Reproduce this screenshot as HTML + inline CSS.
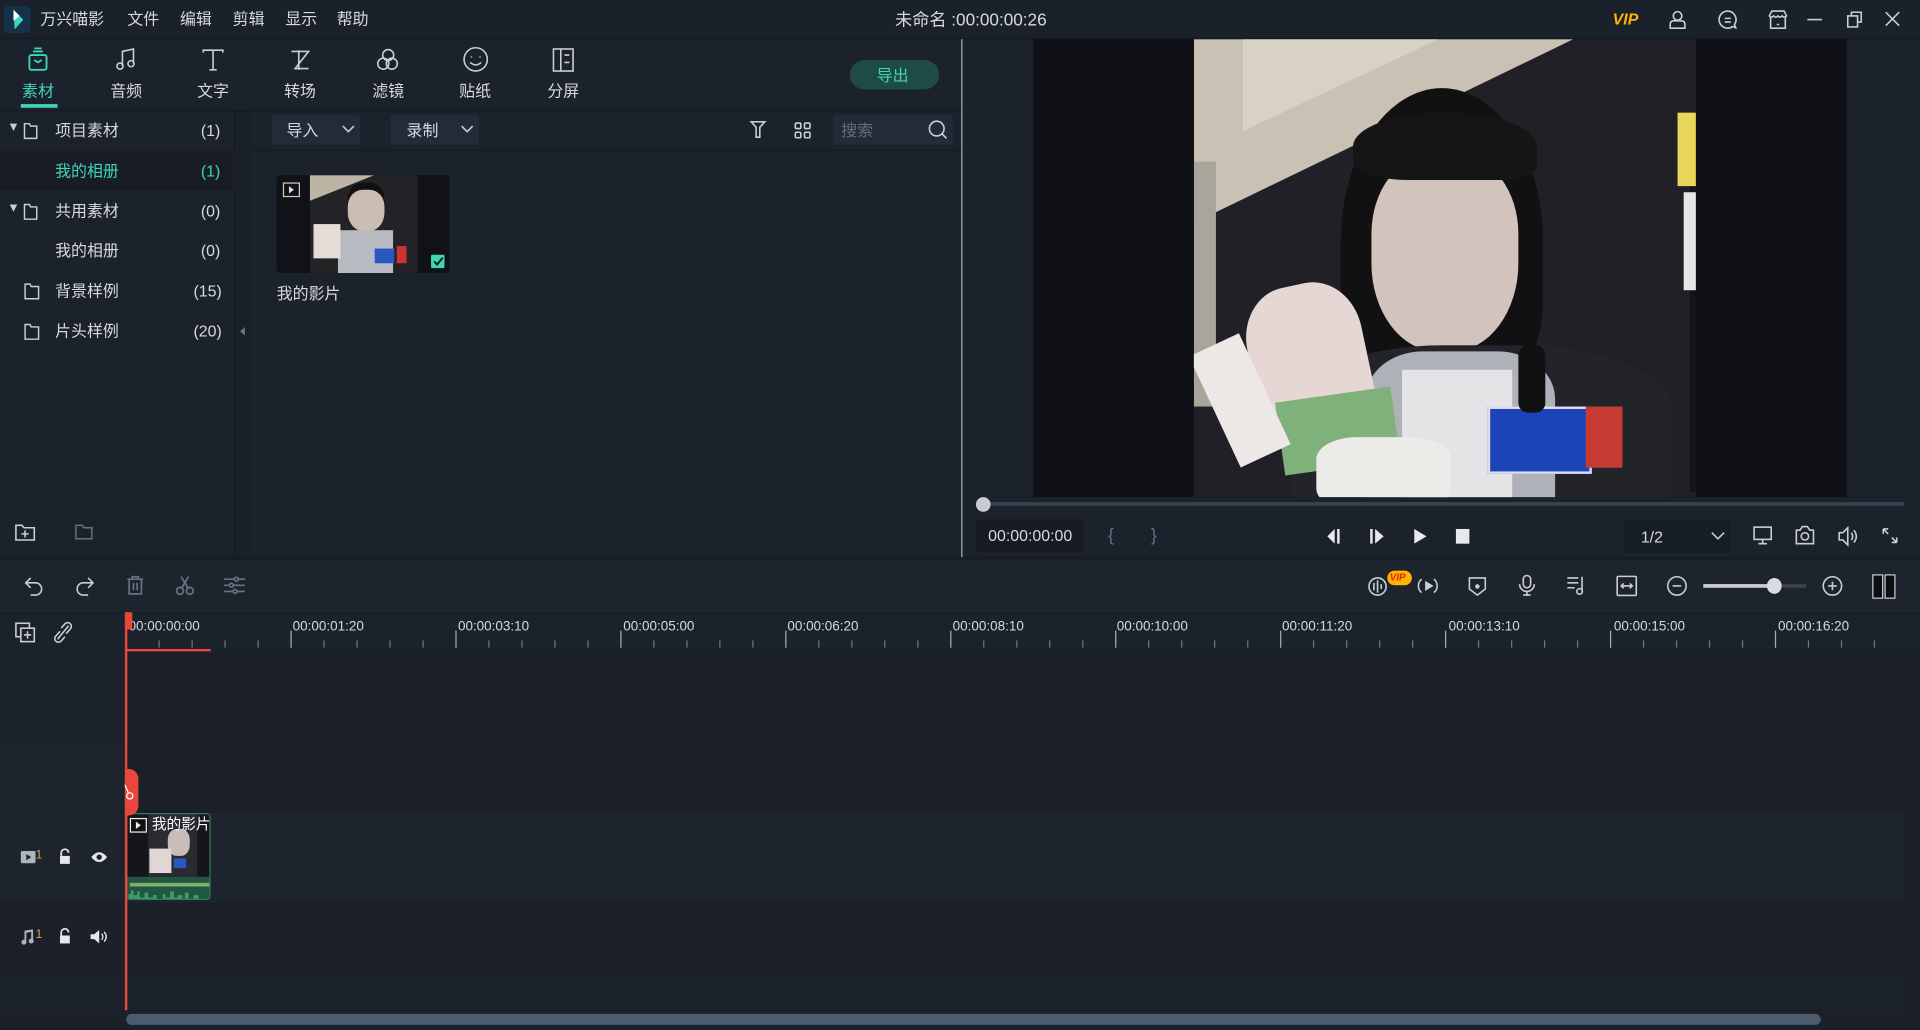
<!DOCTYPE html>
<html><head><meta charset="utf-8">
<style>
*{margin:0;padding:0;box-sizing:border-box}
html,body{width:1920px;height:1030px;overflow:hidden;background:#1c222c}
#w{position:absolute;left:0;top:0;width:1568px;height:841px;transform:scale(1.22449);transform-origin:0 0;background:#1c222c;font-family:"Liberation Sans","Noto Sans CJK SC",sans-serif;color:#d6dae0;font-size:13px}
.a{position:absolute}
.t{position:absolute;white-space:nowrap;line-height:1}
svg{position:absolute;overflow:visible}
.ic{stroke:#c9ced6;fill:none;stroke-width:1.3}
</style></head><body><div id="w">
<!-- title bar -->
<div class="a" style="left:0;top:0;width:1568px;height:32px;background:#1b212b;border-bottom:1px solid #141920"></div>
<div class="a" style="left:3px;top:5px;width:22px;height:22px;border-radius:4px;background:#15324a"></div>
<svg style="left:8px;top:8px" width="14" height="17"><path d="M3 0 L11 8 L4 16 Z" fill="#3fd6c0"/><path d="M3 0 L8 5 L3 9Z" fill="#fff"/></svg>
<div class="t" style="left:33px;top:9px;font-size:13px">万兴喵影</div>
<div class="t" style="left:104px;top:9px">文件</div>
<div class="t" style="left:147px;top:9px">编辑</div>
<div class="t" style="left:190px;top:9px">剪辑</div>
<div class="t" style="left:233px;top:9px">显示</div>
<div class="t" style="left:275px;top:9px">帮助</div>
<div class="t" style="left:731px;top:9px;font-size:14px">未命名 :00:00:00:26</div>
<div class="t" style="left:1317px;top:9px;font-size:13px;font-weight:bold;font-style:italic;color:#ffb400">VIP</div>
<svg style="left:1363px;top:8px" width="16" height="16" class="ic"><circle cx="7" cy="5" r="3.5"/><path d="M1 15 v-3 q0-3 3-3 h6 q3 0 3 3 v3z"/></svg>
<svg style="left:1403px;top:8px" width="16" height="16" class="ic"><path d="M8 1a7 7 0 1 0 4 12.7l2.5 1-1-2.7A7 7 0 0 0 8 1z"/><path d="M5.5 7h5M5.5 10h5"/></svg>
<svg style="left:1444px;top:8px" width="16" height="16" class="ic"><path d="M1 5 l2-4h10l2 4q-2 2-3.5 0-2 2-3.5 0-2 2-3.5 0-2 2-3.5 0z M2 6v9h12V6 M7 12h2"/></svg>
<svg style="left:1476px;top:15px" width="12" height="2" class="ic"><path d="M0 1h12"/></svg>
<svg style="left:1508px;top:9px" width="14" height="14" class="ic"><rect x="1" y="4" width="8" height="9"/><path d="M4 4V1h8v8H9"/></svg>
<svg style="left:1539px;top:9px" width="13" height="13" class="ic"><path d="M1 1l11 11M12 1L1 12"/></svg>

<!-- tabs -->
<svg style="left:22px;top:39px" width="20" height="20" fill="none" stroke="#3fd6b6" stroke-width="1.5"><rect x="2" y="6" width="14" height="12" rx="1.5"/><path d="M5 3h8M6 0.5h6"/><path d="M6 10l3 2 3-2" /></svg>
<div class="t" style="left:18px;top:68px;color:#3fd6b6">素材</div>
<div class="a" style="left:17px;top:85px;width:30px;height:3px;background:#3fd6b6"></div>
<svg style="left:94px;top:39px" width="18" height="20" class="ic" stroke-width="1.6"><path d="M6 15V3l9-2v12"/><circle cx="4" cy="15" r="2.5"/><circle cx="13" cy="13" r="2.5"/></svg>
<div class="t" style="left:90px;top:68px">音频</div>
<svg style="left:165px;top:40px" width="18" height="18" class="ic" stroke-width="1.6"><path d="M1 3V1h16v2M9 1v16M6 17h6"/></svg>
<div class="t" style="left:161px;top:68px">文字</div>
<svg style="left:236px;top:40px" width="18" height="18" class="ic" stroke-width="1.6"><path d="M2 2h14L5 16h11M8 1v16"/></svg>
<div class="t" style="left:232px;top:68px">转场</div>
<svg style="left:307px;top:39px" width="20" height="20" class="ic" stroke-width="1.6"><circle cx="10" cy="6" r="4.5"/><circle cx="6" cy="13" r="4.5"/><circle cx="13" cy="13" r="4.5"/></svg>
<div class="t" style="left:304px;top:68px">滤镜</div>
<svg style="left:378px;top:38px" width="21" height="21" class="ic" stroke-width="1.6"><circle cx="10.5" cy="10.5" r="9.5"/><path d="M7 8v1M14 8v1M6 13q4.5 4 9 0"/></svg>
<div class="t" style="left:375px;top:68px">贴纸</div>
<svg style="left:451px;top:39px" width="18" height="20" class="ic" stroke-width="1.6"><rect x="1" y="1" width="16" height="18"/><path d="M7 1v18M10 6h4M10 12h4"/></svg>
<div class="t" style="left:447px;top:68px">分屏</div>
<div class="a" style="left:694px;top:49px;width:73px;height:24px;border-radius:12px;background:#1f4b45"></div>
<div class="t" style="left:716px;top:55px;color:#3fd6b6">导出</div>
<div class="a" style="left:0;top:90px;width:785px;height:1px;background:#151a22"></div>

<!-- left panel -->
<div class="a" style="left:191px;top:91px;width:1px;height:365px;background:#151a22"></div>
<div class="a" style="left:192px;top:91px;width:13px;height:365px;background:#1a2029"></div>
<div class="a" style="left:0;top:123px;width:190px;height:32px;background:#171c25"></div>
<svg style="left:8px;top:100px" width="20" height="14"><path d="M0 1h6l-3 6z" fill="#c9ced6"/><path d="M12 1h4l1 2h5v10H12z" fill="none" stroke="#c9ced6" stroke-width="1.2"/></svg>
<div class="t" style="left:45px;top:100px">项目素材</div><div class="t" style="left:164px;top:100px">(1)</div>
<div class="t" style="left:45px;top:133px;color:#3fd6b6">我的相册</div><div class="t" style="left:164px;top:133px;color:#3fd6b6">(1)</div>
<svg style="left:8px;top:166px" width="20" height="14"><path d="M0 1h6l-3 6z" fill="#c9ced6"/><path d="M12 1h4l1 2h5v10H12z" fill="none" stroke="#c9ced6" stroke-width="1.2"/></svg>
<div class="t" style="left:45px;top:166px">共用素材</div><div class="t" style="left:164px;top:166px">(0)</div>
<div class="t" style="left:45px;top:198px">我的相册</div><div class="t" style="left:164px;top:198px">(0)</div>
<svg style="left:20px;top:231px" width="12" height="14"><path d="M0.5 1h4l1 2h6v10H0.5z" fill="none" stroke="#c9ced6" stroke-width="1.2"/></svg>
<div class="t" style="left:45px;top:231px">背景样例</div><div class="t" style="left:158px;top:231px">(15)</div>
<svg style="left:20px;top:264px" width="12" height="14"><path d="M0.5 1h4l1 2h6v10H0.5z" fill="none" stroke="#c9ced6" stroke-width="1.2"/></svg>
<div class="t" style="left:45px;top:264px">片头样例</div><div class="t" style="left:158px;top:264px">(20)</div>
<svg style="left:196px;top:267px" width="5" height="7"><path d="M4 0L0 3.5 4 7z" fill="#6a7280"/></svg>
<svg style="left:12px;top:428px" width="17" height="14" class="ic"><path d="M1 1h5l1.5 2H16v10H1z M8.5 5v6M5.5 8h6"/></svg>
<svg style="left:61px;top:428px" width="15" height="13" stroke="#6a7280" fill="none" stroke-width="1.2"><path d="M1 1h5l1.5 2H14v9H1z"/></svg>

<!-- media area -->
<div class="a" style="left:222px;top:94px;width:72px;height:24px;background:#242b36;border-radius:2px"></div>
<div class="t" style="left:234px;top:100px">导入</div>
<svg style="left:280px;top:103px" width="9" height="5" class="ic"><path d="M0 0l4.5 4.5L9 0"/></svg>
<div class="a" style="left:319px;top:94px;width:72px;height:24px;background:#242b36;border-radius:2px"></div>
<div class="t" style="left:332px;top:100px">录制</div>
<svg style="left:377px;top:103px" width="9" height="5" class="ic"><path d="M0 0l4.5 4.5L9 0"/></svg>
<svg style="left:613px;top:99px" width="12" height="14" class="ic"><path d="M0.5 0.5h11L7.5 5v8h-3V5z"/></svg>
<svg style="left:649px;top:100px" width="13" height="13" class="ic"><rect x=".5" y=".5" width="4.5" height="4.5" rx="1"/><rect x="8" y=".5" width="4.5" height="4.5" rx="1"/><rect x=".5" y="8" width="4.5" height="4.5" rx="1"/><rect x="8" y="8" width="4.5" height="4.5" rx="1"/></svg>
<div class="a" style="left:680px;top:94px;width:98px;height:24px;background:#242b36;border-radius:2px"></div>
<div class="t" style="left:687px;top:100px;color:#656d7a">搜索</div>
<svg style="left:758px;top:98px" width="16" height="16" class="ic" stroke-width="1.5"><circle cx="7" cy="7" r="6"/><path d="M11.5 11.5l3.5 3.5"/></svg>
<div class="a" style="left:205px;top:122px;width:580px;height:1px;background:#151a22"></div>
<div class="a" style="left:226px;top:143px;width:141px;height:80px;background:#101217;border-radius:3px;overflow:hidden">
 <div class="a" style="left:27px;top:0;width:88px;height:80px;background:#222227"></div>
 <div class="a" style="left:27px;top:0;width:88px;height:30px;background:#bdb4a6;clip-path:polygon(0 0,60% 0,0 70%)"></div>
 <div class="a" style="left:58px;top:12px;width:30px;height:34px;background:#cbbcb4;border-radius:40% 40% 45% 45%;box-shadow:0 -6px 0 #111"></div>
 <div class="a" style="left:50px;top:45px;width:45px;height:35px;background:#b8bcc2"></div>
 <div class="a" style="left:30px;top:40px;width:22px;height:28px;background:#e7dcd8"></div>
 <div class="a" style="left:80px;top:60px;width:16px;height:12px;background:#2a56c0"></div>
 <div class="a" style="left:98px;top:58px;width:8px;height:14px;background:#c33"></div>
</div>
<svg style="left:231px;top:149px" width="14" height="12"><rect x=".5" y=".5" width="13" height="11" fill="#111" stroke="#ccc"/><path d="M5 3l4 3-4 3z" fill="#ddd"/></svg>
<div class="a" style="left:352px;top:208px;width:11px;height:11px;background:#3fd6b6;border-radius:1px"></div>
<svg style="left:354px;top:210px" width="8" height="7"><path d="M0.5 3.5l2.5 2.5 4.5-5.5" stroke="#111" fill="none" stroke-width="1.5"/></svg>
<div class="t" style="left:226px;top:233px">我的影片</div>

<!-- preview -->
<div class="a" style="left:785px;top:32px;width:1px;height:423px;background:#a8adb4"></div>
<div class="a" style="left:844px;top:32px;width:664px;height:374px;background:#101116"></div>
<div class="a" style="left:975px;top:32px;width:410px;height:374px;background:#202026;overflow:hidden">
 <div class="a" style="left:0;top:0;width:410px;height:150px;background:#c9c2b4;clip-path:polygon(0 0,310px 0,0 150px)"></div>
 <div class="a" style="left:0;top:0;width:410px;height:150px;background:#d8d2c6;clip-path:polygon(40px 0,200px 0,40px 75px)"></div>
 <div class="a" style="left:0;top:100px;width:18px;height:200px;background:#aaa59a"></div>
 <div class="a" style="left:405px;top:70px;width:5px;height:300px;background:#141418"></div>
 <div class="a" style="left:395px;top:60px;width:15px;height:60px;background:#e8d75a"></div>
 <div class="a" style="left:400px;top:125px;width:10px;height:80px;background:#e6e6e6"></div>
 <div class="a" style="left:120px;top:40px;width:165px;height:250px;background:#111;border-radius:50% 50% 30% 30%"></div>
 <div class="a" style="left:145px;top:95px;width:120px;height:160px;background:#d2c3bd;border-radius:40% 40% 45% 45%"></div>
 <div class="a" style="left:130px;top:60px;width:150px;height:55px;background:#151515;border-radius:50% 50% 20% 30%"></div>
 <div class="a" style="left:80px;top:250px;width:310px;height:130px;background:#23232a;border-radius:40% 40% 0 0"></div>
 <div class="a" style="left:140px;top:255px;width:155px;height:130px;background:#aeb2b8;border-radius:30% 30% 0 0"></div>
 <div class="a" style="left:170px;top:270px;width:90px;height:110px;background:#e4e4e6"></div>
 <div class="a" style="left:45px;top:200px;width:95px;height:110px;background:#e6d6d4;transform:rotate(-12deg);border-radius:40% 40% 0 0"></div>
 <div class="a" style="left:70px;top:290px;width:95px;height:60px;background:#7fb27a;transform:rotate(-8deg)"></div>
 <div class="a" style="left:15px;top:245px;width:45px;height:100px;background:#ece8e6;transform:rotate(-25deg)"></div>
 <div class="a" style="left:100px;top:325px;width:110px;height:60px;background:#ecebe8;border-radius:30%"></div>
 <div class="a" style="left:240px;top:300px;width:85px;height:55px;background:#1c44b8;border:2px solid #dde"></div>
 <div class="a" style="left:320px;top:300px;width:30px;height:50px;background:#c53b33"></div>
 <div class="a" style="left:265px;top:250px;width:22px;height:55px;background:#111;border-radius:8px"></div>
</div>
<div class="a" style="left:803px;top:410px;width:752px;height:3px;background:#3a424e"></div>
<div class="a" style="left:797px;top:406px;width:12px;height:12px;border-radius:50%;background:#c8ccd2"></div>
<div class="a" style="left:797px;top:424px;width:88px;height:27px;background:#161b24;border-radius:3px"></div>
<div class="t" style="left:807px;top:431px;font-size:13px">00:00:00:00</div>
<div class="t" style="left:905px;top:430px;color:#6a7280;font-size:14px">{</div>
<div class="t" style="left:940px;top:430px;color:#6a7280;font-size:14px">}</div>
<svg style="left:1084px;top:432px" width="12" height="12" fill="#e6e9ee"><path d="M6 0v12L0 6z"/><rect x="8" y="0" width="2" height="12"/></svg>
<svg style="left:1119px;top:432px" width="12" height="12" fill="#e6e9ee"><rect x="0" y="0" width="2" height="12"/><path d="M4 0v12l7-6z"/></svg>
<svg style="left:1155px;top:432px" width="10" height="12" fill="#e6e9ee"><path d="M0 0v12l10-6z"/></svg>
<svg style="left:1189px;top:432px" width="11" height="12" fill="#e6e9ee"><rect width="11" height="12"/></svg>
<div class="a" style="left:1327px;top:424px;width:86px;height:28px;background:#181e27;border-radius:3px"></div>
<div class="t" style="left:1340px;top:432px">1/2</div>
<svg style="left:1398px;top:435px" width="10" height="6" class="ic"><path d="M0 0l5 5 5-5"/></svg>
<svg style="left:1432px;top:430px" width="15" height="16" class="ic"><rect x=".5" y=".5" width="14" height="10"/><path d="M7.5 11v3M4 14h7"/></svg>
<svg style="left:1466px;top:429px" width="16" height="16" class="ic" stroke-width="1.4"><path d="M1 4h3l2-3h4l2 3h3v11H1z"/><circle cx="8" cy="9" r="3"/></svg>
<svg style="left:1501px;top:430px" width="16" height="16" class="ic" stroke-width="1.4"><path d="M1 5h3l4-4v14l-4-4H1z M11 5q2 3 0 6M13 3q4 5 0 10"/></svg>
<svg style="left:1537px;top:431px" width="13" height="13" class="ic" stroke-width="1.4"><path d="M1 1l4 4M1 1v4M1 1h4M12 12l-4-4M12 12v-4M12 12h-4"/></svg>

<!-- divider between top and timeline -->
<div class="a" style="left:0;top:455px;width:1568px;height:2px;background:#161b23"></div>
<div class="a" style="left:0;top:457px;width:1568px;height:43px;background:#1e242e"></div>
<svg style="left:20px;top:470px" width="16" height="16" class="ic" stroke-width="1.5"><path d="M5 2L1 6l4 4M1 6h8a5 5 0 0 1 0 10H5"/></svg>
<svg style="left:61px;top:470px" width="16" height="16" class="ic" stroke-width="1.5"><path d="M11 2l4 4-4 4M15 6H7a5 5 0 0 0 0 10h4"/></svg>
<svg style="left:103px;top:470px" width="15" height="16" stroke="#6a7280" fill="none" stroke-width="1.4"><path d="M1 3h13M5 3V1h5v2M2.5 3v12h10V3M6 6v6M9 6v6"/></svg>
<svg style="left:143px;top:470px" width="16" height="16" stroke="#6a7280" fill="none" stroke-width="1.4"><circle cx="4" cy="12.5" r="2.8"/><circle cx="12" cy="12.5" r="2.8"/><path d="M5.5 10L11 1M10.5 10L5 1"/></svg>
<svg style="left:183px;top:471px" width="17" height="15" stroke="#6a7280" fill="none" stroke-width="1.3"><path d="M0 2h17M0 7h17M0 12h17"/><circle cx="10" cy="2" r="1.6" fill="#1e242e"/><circle cx="6" cy="7" r="1.6" fill="#1e242e"/><circle cx="9" cy="12" r="1.6" fill="#1e242e"/></svg>
<svg style="left:1117px;top:470px" width="16" height="17" class="ic" stroke-width="1.4"><circle cx="8" cy="9" r="7"/><path d="M5 6v6M8 4v10M11 7v4"/></svg>
<div class="a" style="left:1133px;top:466px;width:20px;height:12px;border-radius:6px;background:#ffb400"></div>
<div class="t" style="left:1135px;top:468px;font-size:8px;font-weight:bold;font-style:italic;color:#e0260f">VIP</div>
<svg style="left:1158px;top:470px" width="16" height="17" class="ic" stroke-width="1.4"><path d="M3 3a7 7 0 0 0 0 11M13 3a7 7 0 0 1 0 11"/><path d="M6.5 5.5v6l5-3z" fill="#c9ced6"/></svg>
<svg style="left:1199px;top:470px" width="15" height="17" class="ic" stroke-width="1.4"><path d="M1 2h13v9l-6.5 5L1 11z"/><circle cx="7.5" cy="9" r="1.2" fill="#c9ced6"/></svg>
<svg style="left:1240px;top:469px" width="14" height="18" class="ic" stroke-width="1.4"><rect x="4" y="1" width="6" height="10" rx="3"/><path d="M1 8a6 6 0 0 0 12 0M7 14v3M4 17h6"/></svg>
<svg style="left:1280px;top:470px" width="16" height="17" class="ic" stroke-width="1.4"><path d="M0 2h9M0 6h9M0 10h6M12 1v12"/><circle cx="10" cy="13" r="2.3"/></svg>
<svg style="left:1320px;top:470px" width="17" height="17" class="ic" stroke-width="1.4"><rect x=".7" y=".7" width="15.6" height="15.6" rx="1"/><path d="M4 8.5h9M6 6.5l-2 2 2 2M11 6.5l2 2-2 2"/></svg>
<svg style="left:1361px;top:470px" width="17" height="17" class="ic" stroke-width="1.4"><circle cx="8.5" cy="8.5" r="7.5"/><path d="M5 8.5h7"/></svg>
<div class="a" style="left:1391px;top:477px;width:84px;height:3px;background:#3a424e"></div>
<div class="a" style="left:1391px;top:477px;width:58px;height:3px;background:#c8ccd2"></div>
<div class="a" style="left:1443px;top:472px;width:12px;height:13px;border-radius:50%;background:#d8dce2"></div>
<svg style="left:1488px;top:470px" width="17" height="17" class="ic" stroke-width="1.4"><circle cx="8.5" cy="8.5" r="7.5"/><path d="M5 8.5h7M8.5 5v7"/></svg>
<svg style="left:1529px;top:469px" width="20" height="20"><rect x="0.5" y="0.5" width="8" height="19" fill="#0c0e12" stroke="#c9ced6"/><rect x="10.5" y="0.5" width="8" height="19" fill="#0c0e12" stroke="#c9ced6"/></svg>

<!-- ruler -->
<div class="a" style="left:0;top:500px;width:1568px;height:1px;background:#171c24"></div>
<div class="a" style="left:0;top:501px;width:1568px;height:31px;background:#1c222c"></div>
<svg style="left:12px;top:508px" width="17" height="17" class="ic" stroke-width="1.3"><rect x="1" y="1" width="11" height="11"/><rect x="5" y="5" width="11" height="11" fill="#1c222c"/><path d="M10.5 7.5v6M7.5 10.5h6"/></svg>
<svg style="left:44px;top:508px" width="15" height="17" class="ic" stroke-width="1.3"><path d="M6 5l3-3.5a3 3 0 0 1 4.5 4L10 9.5M9 12l-3 3.5A3 3 0 0 1 1.5 11.5L5 7.5M3 14L12 3"/></svg>
<svg style="left:103px;top:515px" width="1452" height="16">
<g stroke="#a7aeb8" stroke-width="1">
<path d="M0 0v14M134.7 0v14M269.4 0v14M404.1 0v14M538.8 0v14M673.5 0v14M808.2 0v14M942.9 0v14M1077.6 0v14M1212.3 0v14M1347 0v14"/>
</g>
<g stroke="#6d7682" stroke-width="1" id="ticks"></g>
</svg>
<div class="a" style="left:103px;top:530px;width:69px;height:2px;background:#e8473d"></div>
<div class="t" style="left:105px;top:507px;font-size:11px">00:00:00:00</div>
<div class="t" style="left:239px;top:507px;font-size:11px">00:00:01:20</div>
<div class="t" style="left:374px;top:507px;font-size:11px">00:00:03:10</div>
<div class="t" style="left:509px;top:507px;font-size:11px">00:00:05:00</div>
<div class="t" style="left:643px;top:507px;font-size:11px">00:00:06:20</div>
<div class="t" style="left:778px;top:507px;font-size:11px">00:00:08:10</div>
<div class="t" style="left:912px;top:507px;font-size:11px">00:00:10:00</div>
<div class="t" style="left:1047px;top:507px;font-size:11px">00:00:11:20</div>
<div class="t" style="left:1183px;top:507px;font-size:11px">00:00:13:10</div>
<div class="t" style="left:1318px;top:507px;font-size:11px">00:00:15:00</div>
<div class="t" style="left:1452px;top:507px;font-size:11px">00:00:16:20</div>

<!-- tracks -->
<div class="a" style="left:0;top:532px;width:1568px;height:309px;background:#1a1f28"></div>
<div class="a" style="left:0;top:532px;width:102px;height:74px;background:#1c222c"></div>
<div class="a" style="left:0;top:606px;width:102px;height:57px;background:#1e242e"></div>
<div class="a" style="left:0;top:664px;width:1555px;height:73px;background:#1e242e"></div>
<div class="a" style="left:0;top:738px;width:1555px;height:56px;background:#1b2029"></div>
<div class="a" style="left:0;top:795px;width:1555px;height:30px;background:#1c222c"></div>
<svg style="left:17px;top:695px" width="12" height="10"><rect width="12" height="10" rx="1" fill="#aeb4bd"/><path d="M4.5 2.5v5l4-2.5z" fill="#1e242e"/></svg>
<div class="t" style="left:29px;top:694px;font-size:10px;color:#e0a040">1</div>
<svg style="left:48px;top:693px" width="10" height="13"><path d="M2 6V3.5a3 3 0 0 1 6 0" stroke="#e4e7ec" fill="none" stroke-width="1.4"/><rect x="1" y="6" width="8" height="6.5" fill="#e4e7ec"/></svg>
<svg style="left:74px;top:695px" width="14" height="10"><path d="M0.5 5Q7-3 13.5 5Q7 13 0.5 5z" fill="#e4e7ec"/><circle cx="7" cy="5" r="2.2" fill="#1e242e"/></svg>
<svg style="left:17px;top:759px" width="11" height="12" fill="#aeb4bd"><path d="M3 1l7-1v9h-1.5V2L4.5 2.7V11H3z"/><circle cx="2.5" cy="10.5" r="2"/><circle cx="8.5" cy="9.5" r="2"/></svg>
<div class="t" style="left:29px;top:759px;font-size:10px;color:#e0a040">1</div>
<svg style="left:48px;top:758px" width="10" height="13"><path d="M2 6V3.5a3 3 0 0 1 6 0" stroke="#e4e7ec" fill="none" stroke-width="1.4"/><rect x="1" y="6" width="8" height="6.5" fill="#e4e7ec"/></svg>
<svg style="left:74px;top:759px" width="14" height="12"><path d="M0 4h3l4-3.5v11L3 8H0z" fill="#e4e7ec"/><path d="M9 3.5q2 2.5 0 5M11 2q3.5 4 0 8" stroke="#e4e7ec" fill="none" stroke-width="1.1"/></svg>
<!-- clip -->
<div class="a" style="left:103px;top:664px;width:69px;height:71px;background:#215742;border-radius:3px;overflow:hidden;border:1px solid #2f7a5a">
 <div class="a" style="left:0;top:0;width:69px;height:51px;background:#14161c"></div>
 <div class="a" style="left:17px;top:0;width:40px;height:51px;background:#2a2a30"></div>
 <div class="a" style="left:33px;top:12px;width:18px;height:22px;background:#c8bcb6;border-radius:40%"></div>
 <div class="a" style="left:18px;top:28px;width:18px;height:20px;background:#e0d6d6"></div>
 <div class="a" style="left:38px;top:36px;width:10px;height:8px;background:#2a56c0"></div>
 <div class="a" style="left:2px;top:56px;width:66px;height:3px;background:#7fae6a"></div>
 <svg style="left:1px;top:60px" width="66" height="10"><path d="M0 10V5h2V2h2v4h3V3h2v5h4V4h3v4h4V6h3v4h5V5h2v3h4V3h3v5h3V6h4v4h2V4h3v5h4V6h4v4h5" fill="#3f9d67"/></svg>
</div>
<svg style="left:106px;top:668px" width="14" height="12"><rect x=".5" y=".5" width="13" height="11" fill="#111" stroke="#eee"/><path d="M5 3l4 3-4 3z" fill="#eee"/></svg>
<div class="t" style="left:124px;top:667px;font-size:12px;color:#fff">我的影片</div>
<!-- playhead -->
<div class="a" style="left:102px;top:500px;width:2px;height:330px;background:#e8473d"></div>
<div class="a" style="left:102px;top:500px;width:6px;height:14px;background:#e8473d"></div>
<div class="a" style="left:102px;top:628px;width:11px;height:38px;background:#e8473d;border-radius:0 8px 8px 0"></div>
<svg style="left:102px;top:640px" width="8" height="14" stroke="#fff" fill="none" stroke-width="1"><circle cx="4" cy="10" r="2.5"/><path d="M3 8L0 1"/></svg>
<!-- scrollbar -->
<div class="a" style="left:0;top:825px;width:1568px;height:16px;background:#1b2029"></div>
<div class="a" style="left:103px;top:828px;width:1384px;height:9px;border-radius:5px;background:#4e5b6d"></div>
</div>
<script>
var g=document.getElementById('ticks'),d='';
for(var i=0;i<1452;i+=26.94){var m=Math.round(i/26.94)%5;if(m)d+='M'+i.toFixed(1)+' 8v6';}
g.innerHTML='<path d="'+d+'"/>';
</script>
</body></html>
